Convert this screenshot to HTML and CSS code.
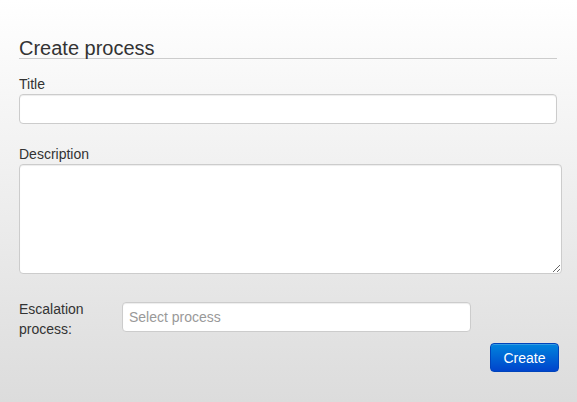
FILE: index.html
```html
<!DOCTYPE html>
<html>
<head>
<meta charset="utf-8">
<link rel="stylesheet" href="styles.css">
</head>
<body>
<form class="panel">
  <h2 class="legend">Create process</h2>
  <label class="label">Title</label>
  <input class="field" type="text">
  <label class="label">Description</label>
  <textarea class="area"></textarea>
  <div class="row">
    <label class="label row-label">Escalation process:</label>
    <input class="field select" type="text" placeholder="Select process">
  </div>
  <div class="actions">
    <button class="btn" type="button">Create</button>
  </div>
</form>
</body>
</html>
```
FILE: styles.css
```css
html, body {
  margin: 0;
  height: 100%;
}
body {
  background: linear-gradient(to bottom, #ffffff 0%, #dcdcdc 100%);
  font-family: "Liberation Sans", Arial, sans-serif;
  font-size: 14px;
  color: #333;
}
.panel {
  padding: 38px 18px 0 19px;
  display: flex;
  flex-direction: column;
}
.legend {
  margin: 0;
  width: 538px;
  font-size: 20px;
  font-weight: normal;
  line-height: 20px;
  border-bottom: 1px solid #ccc;
  color: #333;
}
.label {
  display: block;
  line-height: 20px;
  color: #333;
}
.legend + .label {
  margin-top: 15px;
}
.field {
  box-sizing: border-box;
  width: 538px;
  height: 30px;
  border: 1px solid #ccc;
  border-radius: 4px;
  background: #fff;
  box-shadow: inset 0 1px 1px rgba(0,0,0,0.075);
  font: 14px "Liberation Sans", Arial, sans-serif;
  padding: 4px 6px;
  margin: 0 0 20px;
  outline: none;
}
.area {
  box-sizing: border-box;
  width: 543px;
  height: 110px;
  border: 1px solid #ccc;
  border-radius: 4px;
  background: #fff;
  box-shadow: inset 0 1px 1px rgba(0,0,0,0.075);
  margin: 0;
  resize: both;
}
.row {
  display: flex;
  align-items: flex-start;
  margin-top: 25px;
}
.row-label {
  width: 103px;
  flex: none;
}
.select {
  width: 349px;
  margin: 3px 0 0;
  padding: 4px 6px;
}
.select::placeholder {
  color: #999;
}
.actions {
  display: flex;
  justify-content: flex-end;
  width: 540px;
  margin-top: 4px;
}
.btn {
  box-sizing: border-box;
  width: 69px;
  height: 29px;
  font: 14px "Liberation Sans", Arial, sans-serif;
  color: #fff;
  border: 1px solid #0044bb;
  border-radius: 4px;
  background: linear-gradient(to bottom, #0084dd, #0044cc);
  box-shadow: inset 0 1px 0 rgba(255,255,255,0.2);
  padding: 0;
}
```
